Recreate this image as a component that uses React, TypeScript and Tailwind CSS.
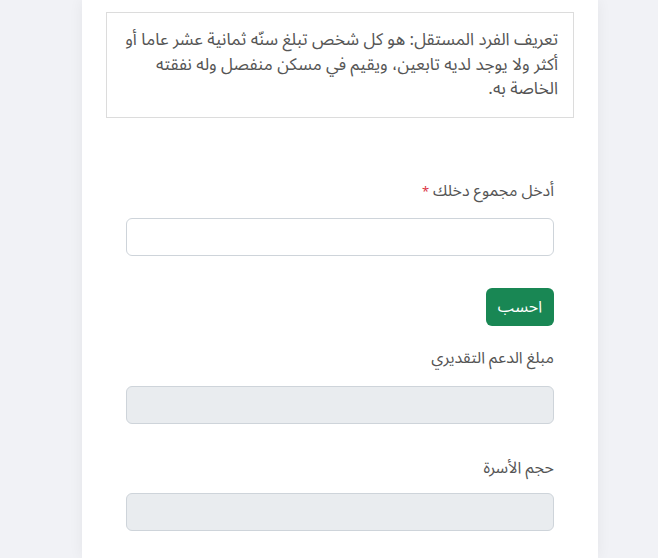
const Field = ({
    label,
    required,
    disabled,
    labelClass,
}: {
    label: string
    required?: boolean
    disabled?: boolean
    labelClass: string
}) => (
    <div className="flex flex-col">
        <label className={`text-[16px] leading-[24px] text-[#555] ${labelClass}`}>
            {label}
            {required && <span className="text-[#dc3545] text-[13px] mr-1">*</span>}
        </label>
        <input
            type="text"
            disabled={disabled}
            className={`h-[38px] w-full rounded-[6px] border border-[#ced4da] px-3 text-[16px] outline-none ${
                disabled ? 'bg-[#e9ecef]' : 'bg-white'
            }`}
        />
    </div>
)

const App = () => {
    return (
        <div
            dir="rtl"
            className="min-h-[558px] w-full bg-[#f1f2f6] font-['Noto_Sans_Arabic','DejaVu_Sans',sans-serif]"
        >
            <div className="flex">
                <div className="h-[558px] w-[516px] bg-white px-[24px] pt-[12px] shadow-[0_0_14px_rgba(0,0,0,0.06)] ml-[82px] mr-[60px]">
                    <div className="border border-[#dcdcdc] px-[15px] py-[15px] text-[17px] leading-[24.5px] text-[#555]">
                        تعريف الفرد المستقل: هو كل شخص تبلغ سنّه ثمانية عشر عاما أو أكثر ولا يوجد لديه تابعين، ويقيم في
                        مسكن منفصل وله نفقته الخاصة به.
                    </div>

                    <div className="mt-[61px] px-[20px]">
                        <Field label="أدخل مجموع دخلك" required labelClass="mb-[14px]" />

                        <div className="mt-[32px] flex">
                            <button className="h-[38px] rounded-[6px] bg-[#198754] px-[12px] text-[16px] text-white">
                                احسب
                            </button>
                        </div>

                        <div className="mt-[20px]">
                            <Field label="مبلغ الدعم التقديري" disabled labelClass="mb-[16px]" />
                        </div>

                        <div className="mt-[32px]">
                            <Field label="حجم الأسرة" disabled labelClass="mb-[13px]" />
                        </div>
                    </div>
                </div>
            </div>
        </div>
    )
}

export default App
